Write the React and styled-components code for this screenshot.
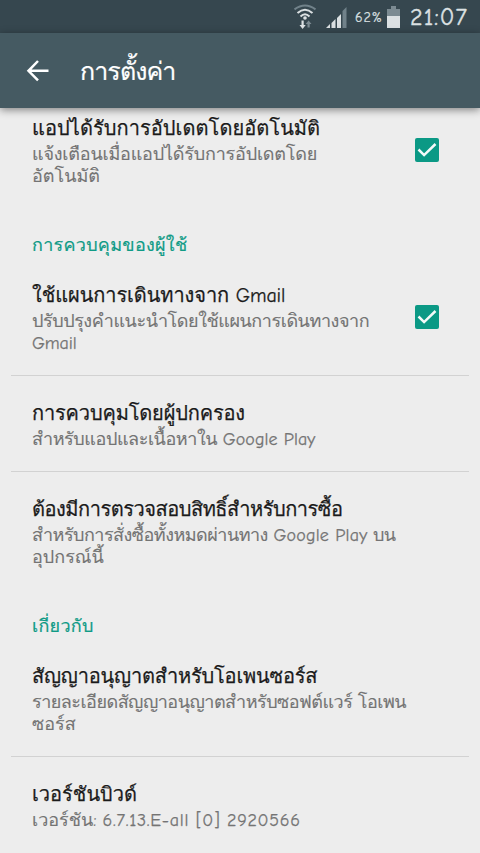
import React from "react";
import styled, { createGlobalStyle } from "styled-components";

const GlobalStyle = createGlobalStyle`
  * { box-sizing: border-box; }
  body { margin: 0; background: #ededed; }
`;

const Screen = styled.div`
  display: flex;
  flex-direction: column;
  width: 480px;
  height: 853px;
  overflow: hidden;
  background: #ededed;
  font-family: "Comic Neue", "Loma", "Noto Sans", sans-serif;
`;

const StatusBar = styled.header`
  display: flex;
  flex: none;
  align-items: center;
  height: 33px;
  padding-left: 294px;
  background: #36474f;
  color: #dce1e3;
`;

const StatusIcon = styled.svg`
  flex: none;
  display: block;
  margin-right: ${(p) => p.$gap}px;
`;

const Battery = styled.span`
  width: 32px;
  flex: none;
  padding-top: 2px;
  font-size: 14px;
  line-height: 20px;
  letter-spacing: 0.9px;
  -webkit-text-stroke: 0.2px;
  white-space: nowrap;
`;

const Clock = styled.time`
  font-size: 24px;
  line-height: 32px;
  letter-spacing: 1.1px;
  -webkit-text-stroke: 0.4px;
  white-space: nowrap;
`;

const AppBar = styled.div`
  display: flex;
  flex: none;
  align-items: center;
  height: 75px;
  padding-left: 25px;
  gap: 30px;
  background: #455a62;
  color: #fff;
  box-shadow: 0 2px 8px rgba(0, 0, 0, 0.45);
  z-index: 1;
`;

const AppTitle = styled.h1`
  margin: 0;
  padding-top: 3px;
  font-size: 25px;
  font-weight: 400;
  line-height: 40px;
  letter-spacing: -0.9px;
  -webkit-text-stroke: 0.2px;
`;

const Settings = styled.main`
  display: flex;
  flex-direction: column;
  padding: 6px 11px 0;
`;

const Section = styled.h2`
  margin: 46px 0 23px 21px;
  color: #109b86;
  font-size: 18px;
  font-weight: 400;
  line-height: 24px;
  letter-spacing: 0.27px;
  -webkit-text-stroke: 0.2px;
`;

const Item = styled.section`
  display: flex;
  align-items: center;
  justify-content: space-between;
  padding: 0 30px 0 21px;
`;

const Divider = styled.hr`
  width: 100%;
  height: 1px;
  margin: 20px 0 23px;
  border: 0;
  background: #d2d2d2;
`;

const Title = styled.h3`
  margin: 0;
  color: #1b1b1b;
  font-size: 20px;
  font-weight: 400;
  line-height: 30px;
  letter-spacing: ${(p) => p.$spacing || 0}px;
  -webkit-text-stroke: 0.25px;
  white-space: nowrap;
`;

const Line = styled.div`
  color: #747474;
  font-size: 18px;
  line-height: 22px;
  letter-spacing: ${(p) => p.$spacing || 0}px;
  -webkit-text-stroke: 0.12px;
  white-space: nowrap;
`;

const Latin = styled.span`
  letter-spacing: ${(p) => p.$spacing || 0}px;
  -webkit-text-stroke: 0.25px;
`;

const CheckIcon = styled.svg`
  display: block;
  flex: none;
  margin-bottom: 2px;
`;

function Checkbox() {
  return (
    <CheckIcon width="24" height="24" viewBox="0 0 24 24">
      <rect width="24" height="24" rx="2" fill="#0b9985" />
      <path d="M3.500 11.500l5.600 5.600L20.500 6" fill="none" stroke="#f4faf9" strokeWidth="2.500" />
    </CheckIcon>
  );
}

function Setting({ title, spacing, checked, children }) {
  return (
    <Item>
      <div>
        <Title $spacing={spacing}>{title}</Title>
        {children}
      </div>
      {checked && <Checkbox />}
    </Item>
  );
}

export default function App() {
  return (
    <Screen>
      <GlobalStyle />
      <StatusBar>
        <StatusIcon $gap={10} width="22" height="26" viewBox="0 0 22 26">
          <g fill="none" strokeWidth="2" stroke="#dce1e3">
            <path d="M0.500 5.500Q11 -2.500 21.500 5.500" stroke="#71828a" />
            <path d="M3.500 9Q11 2.500 18.500 9" />
            <path d="M6.500 12.500Q11 8 15.500 12.500" />
          </g>
          <circle cx="11" cy="14" r="1.800" fill="#dce1e3" />
          <path d="M7.500 16.500h2.200v4.500h2l-3.100 4-3.100-4h2z" fill="#dce1e3" />
          <path d="M13.500 23.500h2.200v-3.500h1.800l-2.900-3.500-2.900 3.500h1.800z" fill="#7c8b92" />
        </StatusIcon>
        <StatusIcon $gap={8} width="21" height="22" viewBox="0 0 21 22">
          <path d="M0 22l4-4v4zM5.500 17l4-4v9h-4zM11 12l4-4v14h-4z" fill="#dce1e3" />
          <path d="M16.500 5l4-4v21h-4z" fill="#71828a" />
        </StatusIcon>
        <Battery>62%</Battery>
        <StatusIcon $gap={10} width="13" height="22" viewBox="0 0 13 22">
          <path d="M4 0h5v3h4v7H0V3h4z" fill="#7c8b92" />
          <path d="M0 10h13v12H0z" fill="#dce1e3" />
        </StatusIcon>
        <Clock>21:07</Clock>
      </StatusBar>
      <AppBar>
        <svg width="25" height="24" viewBox="0 0 25 24">
          <path d="M13 2L3.500 11.800l9.500 9.500M3.500 11.800h20" fill="none" stroke="#fff" strokeWidth="2.500" />
        </svg>
        <AppTitle>การตั้งค่า</AppTitle>
      </AppBar>
      <Settings>
        <Setting checked title="แอปได้รับการอัปเดตโดยอัตโนมัติ" spacing={0.06}>
          <Line $spacing={-0.2}>แจ้งเตือนเมื่อแอปได้รับการอัปเดตโดย</Line>
          <Line>อัตโนมัติ</Line>
        </Setting>
        <Section>การควบคุมของผู้ใช้</Section>
        <Setting checked title="ใช้แผนการเดินทางจาก Gmail" spacing={-0.08}>
          <Line $spacing={-0.45}>ปรับปรุงคำแนะนำโดยใช้แผนการเดินทางจาก</Line>
          <Line><Latin $spacing={-0.1}>Gmail</Latin></Line>
        </Setting>
        <Divider />
        <Setting title="การควบคุมโดยผู้ปกครอง" spacing={-0.16}>
          <Line $spacing={-0.43}>สำหรับแอปและเนื้อหาใน <Latin $spacing={0.08}>Google Play</Latin></Line>
        </Setting>
        <Divider />
        <Setting title="ต้องมีการตรวจสอบสิทธิ์สำหรับการซื้อ" spacing={-0.48}>
          <Line $spacing={-0.52}>สำหรับการสั่งซื้อทั้งหมดผ่านทาง <Latin $spacing={0.2}>Google Play</Latin> บน</Line>
          <Line>อุปกรณ์นี้</Line>
        </Setting>
        <Section>เกี่ยวกับ</Section>
        <Setting title="สัญญาอนุญาตสำหรับโอเพนซอร์ส" spacing={-0.19}>
          <Line $spacing={-0.51}>รายละเอียดสัญญาอนุญาตสำหรับซอฟต์แวร์ โอเพน</Line>
          <Line>ซอร์ส</Line>
        </Setting>
        <Divider />
        <Setting title="เวอร์ชันบิวด์">
          <Line>เวอร์ชัน: <Latin $spacing={0.72}>6.7.13.E-all [0] 2920566</Latin></Line>
        </Setting>
      </Settings>
    </Screen>
  );
}
